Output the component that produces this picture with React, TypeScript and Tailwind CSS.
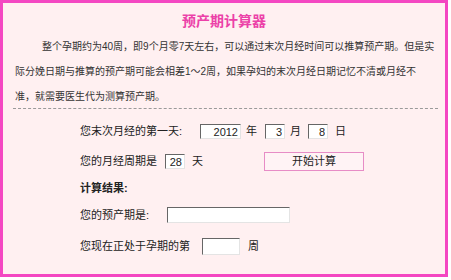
const FONT = "font-['Liberation_Sans','Noto_Sans_CJK_SC',sans-serif]";

const INPUT =
  "h-full bg-white text-right pr-[2px] text-[11px] text-[#222] outline-none border border-t-[#666] border-l-[#666] border-b-[#e4e4e4] border-r-[#e4e4e4]";

function Box({ value, className }: { value?: string; className: string }) {
  return (
    <div className={className}>
      <input readOnly defaultValue={value ?? ""} className={`${INPUT} w-full`} />
    </div>
  );
}

export default function App() {
  return (
    <div className={`w-[451px] h-[280px] bg-white ${FONT}`}>
      <div className="w-[448px] h-[277px] border-[3px] border-[#f447c2] bg-[#fff0f1] text-[#222]">
        <div className="mt-[6px] h-[25px] leading-[25px] text-center text-[14px] font-bold text-[#ec41a8]">
          预产期计算器
        </div>
        <div className="pl-[12px] text-[10px] leading-[25px] text-[#333]">
          <div className="pl-[27px]">
            整个孕期约为40周，即9个月零7天左右，可以通过末次月经时间可以推算预产期。但是实
          </div>
          <div>际分娩日期与推算的预产期可能会相差1～2周，如果孕妇的末次月经日期记忆不清或月经不</div>
          <div>准，就需要医生代为测算预产期。</div>
        </div>
        <div className="ml-[10px] mr-[7px] -mt-[1px] border-t border-dashed border-[#9a9a9a]" />

        <div className="pl-[77px] text-[11px]">
          <div className="mt-[7px] h-[30px] flex items-center">
            <span className="w-[120px]">您末次月经的第一天:</span>
            <Box value="2012" className="w-[41px] h-[15px]" />
            <span className="ml-[5px]">年</span>
            <Box value="3" className="ml-[8px] w-[20px] h-[15px]" />
            <span className="ml-[5px]">月</span>
            <Box value="8" className="ml-[7px] w-[20px] h-[15px]" />
            <span className="ml-[7px]">日</span>
          </div>

          <div className="h-[30px] flex items-center">
            <span className="w-[85px]">您的月经周期是</span>
            <Box value="28" className="w-[20px] h-[15px]" />
            <span className="ml-[7px]">天</span>
            <button className="ml-[61px] w-[100px] h-[19px] border border-[#e78cc6] bg-[#fff3f5] text-[11px] leading-none">
              开始计算
            </button>
          </div>

          <div className="h-[24px] flex items-center font-bold">计算结果:</div>

          <div className="h-[30px] flex items-center">
            <span className="w-[87px]">您的预产期是:</span>
            <Box className="w-[123px] h-[16px]" />
          </div>

          <div className="mt-[1px] h-[30px] flex items-center">
            <span className="w-[122px]">您现在正处于孕期的第</span>
            <Box className="w-[38px] h-[17px]" />
            <span className="ml-[8px]">周</span>
          </div>
        </div>
      </div>
    </div>
  );
}
